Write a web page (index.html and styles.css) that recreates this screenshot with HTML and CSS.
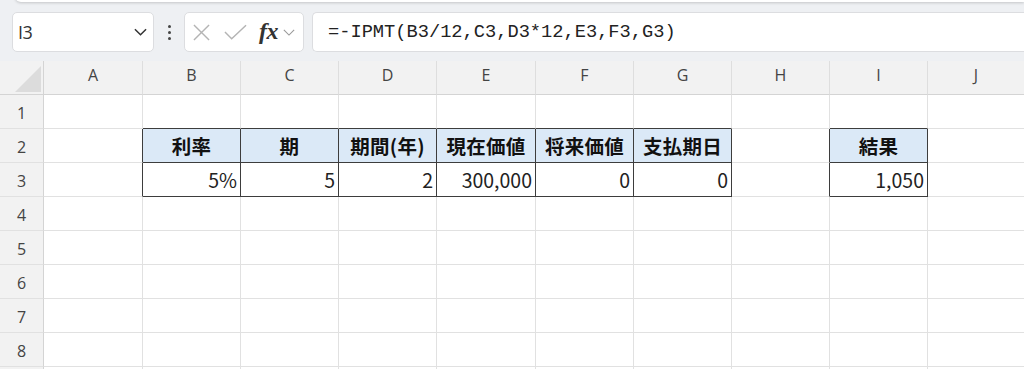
FILE: index.html
```html
<!DOCTYPE html>
<html lang="ja">
<head>
    <meta charset="UTF-8">
    <title>IPMT - Sheet</title>
    <link rel="stylesheet" href="styles.css">
</head>
<body>
    <div class="ribbon-edge"></div>
    <header class="formula-bar">
        <div class="name-box">
            <span class="name-text">I3</span>
            <svg class="chevron" viewBox="0 0 14 8"><path d="M1 1l6 6 6-6"></path></svg>
        </div>
        <div class="more-dots"><span></span><span></span><span></span></div>
        <div class="fx-box">
            <svg class="icon-cancel" viewBox="0 0 18 18"><path d="M1 1l16 16M17 1L1 17"></path></svg>
            <svg class="icon-enter" viewBox="0 0 24 16"><path d="M1 8l7 7L23 1"></path></svg>
            <span class="fx">fx</span>
            <svg class="chevron small" viewBox="0 0 14 8"><path d="M1 1l6 6 6-6"></path></svg>
        </div>
        <div class="formula-input">=-IPMT(B3/12,C3,D3*12,E3,F3,G3)</div>
    </header>

    <main class="sheet">
        <div class="corner"><div class="corner-tri"></div></div>
        <div class="col-head">A</div>
        <div class="col-head">B</div>
        <div class="col-head">C</div>
        <div class="col-head">D</div>
        <div class="col-head">E</div>
        <div class="col-head">F</div>
        <div class="col-head">G</div>
        <div class="col-head">H</div>
        <div class="col-head">I</div>
        <div class="col-head last">J</div>

        <!-- row 1 -->
        <div class="row-head">1</div>
        <div class="cell"></div>
        <div class="cell edge-b"></div>
        <div class="cell edge-b"></div>
        <div class="cell edge-b"></div>
        <div class="cell edge-b"></div>
        <div class="cell edge-b"></div>
        <div class="cell edge-b"></div>
        <div class="cell"></div>
        <div class="cell edge-b"></div>
        <div class="cell last"></div>

        <!-- row 2 -->
        <div class="row-head">2</div>
        <div class="cell edge-r"></div>
        <div class="cell th">利率</div>
        <div class="cell th">期</div>
        <div class="cell th">期間(年)</div>
        <div class="cell th">現在価値</div>
        <div class="cell th">将来価値</div>
        <div class="cell th">支払期日</div>
        <div class="cell edge-r"></div>
        <div class="cell th">結果</div>
        <div class="cell last"></div>

        <!-- row 3 -->
        <div class="row-head">3</div>
        <div class="cell edge-r"></div>
        <div class="cell td">5%</div>
        <div class="cell td">5</div>
        <div class="cell td">2</div>
        <div class="cell td">300,000</div>
        <div class="cell td">0</div>
        <div class="cell td">0</div>
        <div class="cell edge-r"></div>
        <div class="cell td">1,050</div>
        <div class="cell last"></div>
    </main>

    <script>
        // empty rows 4..8, plus the top of row 9
        const sheet = document.querySelector('.sheet');
        for (let r = 4; r <= 9; r++) {
            const head = document.createElement('div');
            head.className = 'row-head';
            if (r < 9) head.textContent = r;
            sheet.appendChild(head);
            for (let c = 0; c < 10; c++) {
                const cell = document.createElement('div');
                cell.className = c === 9 ? 'cell last' : 'cell';
                sheet.appendChild(cell);
            }
        }
    </script>
</body>
</html>
```

FILE: styles.css
```css
:root {
    --toolbar-bg: #eef0f3;
    --head-bg: #f2f2f2;
    --grid-line: #e1e1e1;
    --head-line: #d4d4d4;
    --dark-line: #3d3d3d;
    --header-blue: #dbe9f7;
}

* {
    margin: 0;
    padding: 0;
    box-sizing: border-box;
}

body {
    width: 1024px;
    height: 369px;
    overflow: hidden;
    background: var(--toolbar-bg);
    font-family: "Open Sans", "Noto Sans", sans-serif;
    position: relative;
}

.ribbon-edge {
    position: absolute;
    top: -6px;
    left: 15px;
    right: 0;
    height: 8px;
    background: #ffffff;
    border-radius: 0 0 0 6px;
    box-shadow: 0 1px 3px rgba(0, 0, 0, 0.18);
}

.formula-bar {
    height: 61px;
    display: flex;
    align-items: flex-start;
    padding: 12px 0 0 12px;
}

.name-box,
.fx-box,
.formula-input {
    height: 40px;
    background: #ffffff;
    border: 1px solid #dcdde0;
    border-radius: 5px;
    display: flex;
    align-items: center;
}

.name-box {
    width: 142px;
    padding: 0 6px 0 5px;
    justify-content: space-between;
}

.name-text {
    font-family: "Open Sans", sans-serif;
    font-size: 18px;
    color: #333;
    letter-spacing: -0.5px;
}

.chevron {
    width: 13px;
    height: 8px;
    fill: none;
    stroke: #333;
    stroke-width: 1.6;
}

.chevron.small {
    width: 12px;
    height: 7px;
    stroke: #999;
    stroke-width: 1.3;
    margin-left: 5px;
}

.more-dots {
    width: 30px;
    height: 40px;
    display: flex;
    flex-direction: column;
    align-items: center;
    justify-content: center;
    gap: 3px;
}

.more-dots span {
    width: 3px;
    height: 3px;
    border-radius: 50%;
    background: #444;
}

.fx-box {
    width: 120px;
    padding: 0 4px 0 8px;
}

.icon-cancel {
    width: 17px;
    height: 17px;
    fill: none;
    stroke: #b4b4b4;
    stroke-width: 1.5;
}

.icon-enter {
    width: 23px;
    height: 16px;
    margin-left: 14px;
    fill: none;
    stroke: #b4b4b4;
    stroke-width: 1.5;
}

.fx {
    font-family: "Liberation Serif", "DejaVu Serif", serif;
    font-style: italic;
    font-weight: 700;
    font-size: 24px;
    color: #333;
    margin-left: 12px;
    line-height: 1;
    padding-bottom: 3px;
    letter-spacing: -0.5px;
}

.formula-input {
    flex: 1;
    margin-left: 8px;
    border-right: none;
    border-radius: 5px 0 0 5px;
    padding-left: 15px;
    font-family: "Liberation Mono", "DejaVu Sans Mono", monospace;
    font-size: 18.7px;
    color: #222;
}

/* grid */
.sheet {
    display: grid;
    grid-template-columns: 44px 99px 98px 98px 98px 99px 98px 98px 98px 98px 1fr;
    grid-auto-rows: 34px;
    background: #ffffff;
}

.corner {
    background: var(--head-bg);
    border-right: 1px solid var(--head-line);
    border-bottom: 1px solid var(--head-line);
    position: relative;
}

.corner-tri {
    position: absolute;
    right: 2px;
    bottom: 2px;
    width: 26px;
    height: 26px;
    background: #dcdcdc;
    clip-path: polygon(100% 0, 100% 100%, 0 100%);
}

.col-head {
    background: var(--head-bg);
    border-right: 1px solid #dedede;
    border-bottom: 1px solid var(--head-line);
    display: flex;
    justify-content: center;
    padding-top: 3px;
    font-size: 16px;
    color: #444;
}

.row-head {
    background: var(--head-bg);
    border-right: 1px solid var(--head-line);
    border-bottom: 1px solid var(--grid-line);
    display: flex;
    align-items: center;
    justify-content: center;
    padding-top: 2px;
    font-size: 16px;
    color: #444;
}

.cell {
    border-right: 1px solid var(--grid-line);
    border-bottom: 1px solid var(--grid-line);
    display: flex;
    align-items: center;
    font-family: "Noto Sans CJK JP", sans-serif;
    font-size: 19.5px;
    color: #222;
}

.last {
    border-right: none;
}

.edge-b {
    border-bottom-color: var(--dark-line);
}

.edge-r {
    border-right-color: var(--dark-line);
}

.th {
    background: var(--header-blue);
    border-right-color: var(--dark-line);
    border-bottom-color: var(--dark-line);
    justify-content: center;
    font-weight: 700;
    font-size: 19.5px;
    color: #111;
    letter-spacing: 0.3px;
}

.td {
    border-right-color: var(--dark-line);
    border-bottom-color: var(--dark-line);
    justify-content: flex-end;
    padding-right: 3px;
}
```
